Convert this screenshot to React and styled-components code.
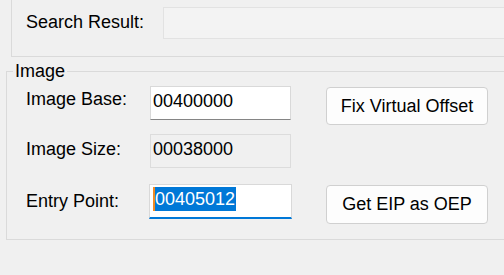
import React from "react";
import styled, { createGlobalStyle } from "styled-components";

const Global = createGlobalStyle`
  html, body {
    margin: 0;
    padding: 0;
    background: #f0f0f0;
    overflow: hidden;
  }
  body {
    font-family: "Liberation Sans", Arial, sans-serif;
    font-size: 18px;
    color: #000;
  }
`;

const Page = styled.div`
  width: 504px;
  height: 275px;
  overflow: hidden;
`;

const TopPanel = styled.div`
  box-sizing: border-box;
  width: 520px;
  height: 57px;
  margin-left: 11px;
  border-left: 1px solid #dadada;
  border-bottom: 1px solid #dadada;
  display: flex;
  align-items: flex-start;
  padding: 7px 0 0 14px;
`;

const SearchLabel = styled.div`
  width: 137px;
  line-height: 31px;
  flex: none;
`;

const SearchField = styled.div`
  box-sizing: border-box;
  flex: 1;
  height: 32px;
  background: #f3f3f3;
  border: 1px solid #e2e2e2;
`;

const Group = styled.fieldset`
  box-sizing: border-box;
  width: 520px;
  margin: 4px 0 0 6px;
  padding: 5px 0 20px 6px;
  border: 1px solid #dadada;
  min-inline-size: 0;
`;

const Legend = styled.legend`
  padding: 0 2px;
  line-height: 20px;
  font-size: 18px;
`;

const Rows = styled.div`
  margin-left: 13px;
  display: flex;
  flex-direction: column;
`;

const Row = styled.div`
  display: grid;
  grid-template-columns: 124px 141px 162px;
  column-gap: 0;
  height: ${(p) => p.$h}px;
  margin-top: ${(p) => p.$mt}px;
  align-items: start;
`;

const Label = styled.div`
  line-height: 20px;
  padding-top: ${(p) => p.$pt}px;
  white-space: nowrap;
`;

const TextBox = styled.div`
  box-sizing: border-box;
  height: ${(p) => (p.$focused ? 35 : 34)}px;
  margin-left: ${(p) => (p.$focused ? -1 : 0)}px;
  width: ${(p) => (p.$focused ? 143 : 141)}px;
  padding: 2px 2px 0;
  line-height: 24px;
  background: ${(p) => (p.$disabled ? "#f0f0f0" : "#ffffff")};
  border: 1px solid ${(p) => (p.$disabled ? "#dcdcdc" : "#d9d9d9")};
  border-bottom: ${(p) =>
    p.$focused ? "2px solid #0078d7" : p.$disabled ? "1px solid #dcdcdc" : "1px solid #858585"};
  white-space: nowrap;
  overflow: hidden;
`;

const Selected = styled.span`
  display: inline-block;
  background: #0078d7;
  color: #fff;
  line-height: 24px;
  border-left: 2px solid #f08a24;
  margin-left: 1px;
  padding-right: 1px;
`;

const Button = styled.button`
  box-sizing: border-box;
  width: 162px;
  height: ${(p) => p.$h}px;
  margin-top: ${(p) => p.$mt}px;
  margin-left: 35px;
  background: #fdfdfd;
  border: 1px solid #d0d0d0;
  border-radius: 4px;
  font-family: "Liberation Sans", Arial, sans-serif;
  font-size: 18px;
  color: #000;
  padding: 0;
  white-space: nowrap;
`;

export default function App() {
  return (
    <Page>
      <Global />
      <TopPanel>
        <SearchLabel>Search Result:</SearchLabel>
        <SearchField />
      </TopPanel>
      <Group>
        <Legend>Image</Legend>
        <Rows>
          <Row $h={34} $mt={0}>
            <Label $pt={3}>Image Base:</Label>
            <TextBox>00400000</TextBox>
            <Button $h={38} $mt={1}>Fix Virtual Offset</Button>
          </Row>
          <Row $h={34} $mt={14}>
            <Label $pt={5}>Image Size:</Label>
            <TextBox $disabled>00038000</TextBox>
            <div />
          </Row>
          <Row $h={35} $mt={16}>
            <Label $pt={7}>Entry Point:</Label>
            <TextBox $focused>
              <Selected>00405012</Selected>
            </TextBox>
            <Button $h={39} $mt={1}>Get EIP as OEP</Button>
          </Row>
        </Rows>
      </Group>
    </Page>
  );
}
